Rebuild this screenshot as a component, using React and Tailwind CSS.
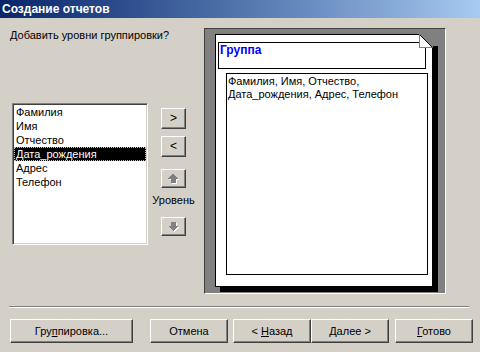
import React from 'react';

const fields = ['Фамилия', 'Имя', 'Отчество', 'Дата_рождения', 'Адрес', 'Телефон'];

// classic raised 3D button
function WinButton({ className = '', children }) {
    return (
        <button className={`flex items-center justify-center bg-[#d4d0c8] border border-t-white border-l-white border-r-[#404040] border-b-[#404040] shadow-[inset_-1px_-1px_0_#808080] text-black ${className}`}>
            <span className="whitespace-pre">{children}</span>
        </button>
    );
}

function ArrowIcon({ down }) {
    const pts = down
        ? '3,0 8,0 8,4 11,4 5.5,9.5 0,4 3,4'
        : '5.5,0 11,5.5 8,5.5 8,9.5 3,9.5 3,5.5 0,5.5';
    return (
        <svg width="13" height="12" viewBox="0 0 13 12" shapeRendering="crispEdges" className="block">
            <polygon points={pts} fill="#ffffff" transform="translate(1.5 1.5)" />
            <polygon points={pts} fill="#808080" transform="translate(0.5 0.5)" />
        </svg>
    );
}

export default function App() {
    return (
        <div
            className="w-[480px] h-[352px] bg-[#d4d0c8] flex flex-col overflow-hidden text-[11px] leading-[13px] text-black"
            style={{ fontFamily: '"Liberation Sans", Arial, sans-serif' }}
        >
            {/* Title bar */}
            <div className="h-[18px] shrink-0 flex items-center pl-[2px] bg-linear-to-r from-[#0a246a] to-[#a6caf0]">
                <span className="text-white font-bold text-[12px]">Создание отчетов</span>
            </div>

            <div className="flex">
                {/* Left side */}
                <div className="w-[204px] shrink-0 flex flex-col pl-[10px]">
                    <div className="mt-[11px] h-[13px]">Добавить уровни группировки?</div>

                    <div className="flex mt-[61px]">
                        {/* List */}
                        <div className="ml-[2px] w-[136px] h-[142px] bg-white border border-t-[#808080] border-l-[#808080] border-r-white border-b-white shadow-[inset_1px_1px_0_#404040,inset_-1px_-1px_0_#d4d0c8] p-px">
                            {fields.map((f, i) => (
                                <div
                                    key={f}
                                    className={`h-[14px] pl-px flex items-center border border-dotted ${i === 3 ? 'bg-black text-white border-[#c0c0c0]' : 'border-transparent'}`}
                                >
                                    {f}
                                </div>
                            ))}
                        </div>

                        {/* Move buttons */}
                        <div className="ml-[13px] w-[25px] flex flex-col items-center pt-[5px]">
                            <WinButton className="w-[25px] h-[21px] text-[12px]">&gt;</WinButton>
                            <WinButton className="w-[25px] h-[21px] mt-[7px] text-[12px]">&lt;</WinButton>
                            <WinButton className="w-[25px] h-[19px] mt-[12px]">
                                <ArrowIcon />
                            </WinButton>
                            <div className="mt-[6px] h-[13px] whitespace-nowrap">Уровень</div>
                            <WinButton className="w-[25px] h-[19px] mt-[10px]">
                                <ArrowIcon down />
                            </WinButton>
                        </div>
                    </div>
                </div>

                {/* Preview */}
                <div className="mt-[10px] w-[242px] h-[266px] bg-[#808080] border border-t-[#404040] border-l-[#404040] border-r-white border-b-white pl-[10px] pt-[5px]">
                    <div className="relative w-[218px] h-[253px] bg-white border border-black shadow-[5px_5px_0_#000] flex flex-col pl-[2px] pt-[7px]">
                        <div className="w-[208px] h-[27px] border border-black leading-[14px]">
                            <span className="font-bold text-[12px] text-[#0000ff] pl-px">Группа</span>
                        </div>
                        <div className="ml-[8px] mt-[4px] w-[202px] h-[202px] border border-black pl-px pt-px">
                            Фамилия, Имя, Отчество,
                            <br />
                            Дата_рождения, Адрес, Телефон
                        </div>

                        {/* dog-ear corner */}
                        <svg
                            className="absolute -top-px -right-[6px]"
                            width="19"
                            height="19"
                            viewBox="0 0 19 19"
                            shapeRendering="crispEdges"
                        >
                            <polygon points="1,0 19,0 19,12 14,12 14,14 13,14" fill="#808080" />
                            <polygon points="0,0 13,13 0,13" fill="#ffffff" />
                            <line x1="0.5" y1="0.5" x2="13.5" y2="13.5" stroke="#000" strokeWidth="1" shapeRendering="auto" />
                            <line x1="0.5" y1="1" x2="0.5" y2="13.5" stroke="#808080" />
                            <line x1="0.5" y1="13.5" x2="13" y2="13.5" stroke="#808080" />
                        </svg>
                    </div>
                </div>
            </div>

            {/* Separator */}
            <div className="mt-[12px] mx-[9px] w-[460px] border-t border-t-[#808080] border-b border-b-white" />

            {/* Bottom buttons */}
            <div className="flex pl-[10px] mt-[11px]">
                <WinButton className="w-[123px] h-[24px]">
                    Гру<u>п</u>пировка...
                </WinButton>
                <WinButton className="w-[78px] h-[24px] ml-[17px]">Отмена</WinButton>
                <WinButton className="w-[78px] h-[24px] ml-[5px]">
                    {'< '}<u>Н</u>азад
                </WinButton>
                <WinButton className="w-[78px] h-[24px]">
                    <u>Д</u>алее{' >'}
                </WinButton>
                <WinButton className="w-[78px] h-[24px] ml-[6px]">
                    <u>Г</u>отово
                </WinButton>
            </div>
        </div>
    );
}
